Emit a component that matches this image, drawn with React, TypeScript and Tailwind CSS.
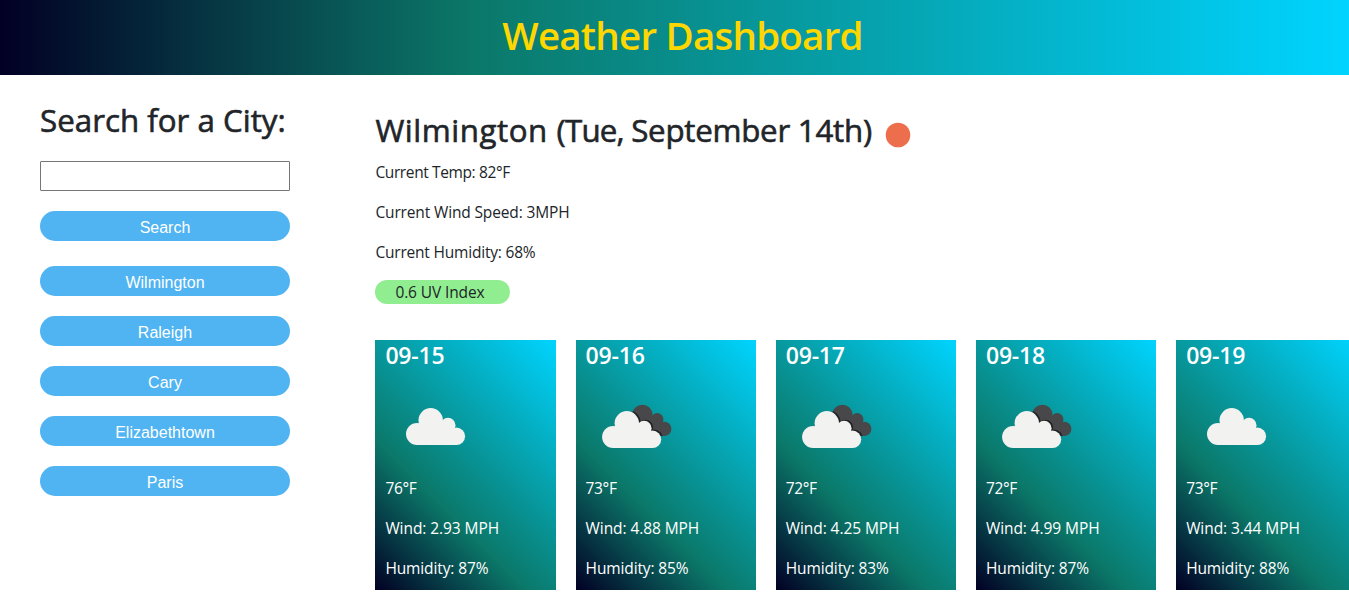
type Day = { date: string; icon: "cloud" | "broken"; temp: string; wind: string; humidity: string };

const cities = ["Wilmington", "Raleigh", "Cary", "Elizabethtown", "Paris"];

const days: Day[] = [
  { date: "09-15", icon: "cloud", temp: "76°F", wind: "2.93", humidity: "87%" },
  { date: "09-16", icon: "broken", temp: "73°F", wind: "4.88", humidity: "85%" },
  { date: "09-17", icon: "broken", temp: "72°F", wind: "4.25", humidity: "83%" },
  { date: "09-18", icon: "broken", temp: "72°F", wind: "4.99", humidity: "87%" },
  { date: "09-19", icon: "cloud", temp: "73°F", wind: "3.44", humidity: "88%" },
];

function CloudShape() {
  return (
    <>
      <circle cx="31.6" cy="57" r="11" />
      <circle cx="45.3" cy="43.3" r="12.2" />
      <circle cx="62.6" cy="48.2" r="7.5" />
      <circle cx="71" cy="59.3" r="8.7" />
      <path d="M31 48H62L71 54V68H31Z" />
    </>
  );
}

function DarkShape() {
  return (
    <>
      <circle cx="56.4" cy="38" r="10.3" />
      <circle cx="71.2" cy="42.3" r="6.2" />
      <circle cx="78.2" cy="51.9" r="7.2" />
      <path d="M50 42L66 40L76 48L78 59H60Z" />
    </>
  );
}

function WeatherIcon({ kind, id }: { kind: Day["icon"]; id: string }) {
  return (
    <svg viewBox="0 0 100 100" className="size-[100px] shrink-0" aria-hidden="true">
      {kind === "broken" && (
        <>
          <clipPath id={id}>
            <DarkShape />
          </clipPath>
          <g fill="#48484a">
            <DarkShape />
          </g>
          <g clipPath={`url(#${id})`}>
            <g fill="#202124" transform="translate(-3 2)">
              <CloudShape />
            </g>
          </g>
        </>
      )}
      <g fill="#f2f2f0" transform={kind === "broken" ? "translate(-4.5 3)" : "translate(0.4 0)"}>
        <CloudShape />
      </g>
    </svg>
  );
}

const buttonClass =
  "h-[30px] w-full rounded-full bg-[#4fb4f1] pt-[3px] text-center font-['Liberation_Sans',Arial,sans-serif] text-base leading-[27px] text-white";

export default function App() {
  return (
    <div className="h-[600px] w-full overflow-hidden bg-white font-['Open_Sans',sans-serif] text-[#212529]">
      <header className="flex h-[75px] items-center justify-center bg-[linear-gradient(90deg,#020024_0%,#0b7869_35%,#00d4ff_100%)] pb-1.5 pl-4">
        <h1 className="text-[38.5px] font-semibold leading-[48px] tracking-[-0.77px] text-[#ffd700]">
          Weather Dashboard
        </h1>
      </header>

      <div className="flex">
        <aside className="w-[375.4px] shrink-0 pl-10 pt-[26px]">
          <h2 className="whitespace-nowrap text-[31.3px] leading-[38px] [-webkit-text-stroke:0.6px_#212529]">
            Search for a City:
          </h2>
          <div className="w-[250px]">
            <input
              aria-label="City"
              className="mt-[22px] block h-[30px] w-full rounded-[1px] border border-[#767676] bg-white px-1"
            />
            <button className={`${buttonClass} mt-5 block`}>Search</button>
            <div className="mt-[25px] flex flex-col gap-5">
              {cities.map((city) => (
                <button key={city} className={buttonClass}>
                  {city}
                </button>
              ))}
            </div>
          </div>
        </aside>

        <main className="shrink-0 pt-9">
          <div className="flex h-[38px] items-center gap-[13px]">
            <h2 className="whitespace-nowrap text-[31.3px] leading-[38px] [-webkit-text-stroke:0.6px_#212529]">
              <span className="tracking-[0.55px]">Wilmington </span>
              <span className="tracking-[-0.8px]">(Tue, </span>
              <span className="tracking-[-0.26px]">September 14th)</span>
            </h2>
            <svg viewBox="0 0 26 26" className="mt-[9px] size-[26px]" aria-hidden="true">
              <circle cx="13" cy="13" r="12.3" fill="#ec6e4c" />
            </svg>
          </div>
          <div className="mt-[11px] flex flex-col gap-4 text-[15.5px] leading-6">
            <p className="tracking-[-0.38px]">Current Temp: 82°F</p>
            <p className="tracking-[-0.14px]">Current Wind Speed: 3MPH</p>
            <p className="tracking-[-0.2px]">Current Humidity: 68%</p>
            <p className="w-[135px] rounded-full bg-[#90ee90] pl-5 tracking-[-0.12px]">0.6 UV Index</p>
          </div>

          <div className="mt-9 flex gap-5">
            {days.map((day) => (
              <section
                key={day.date}
                className="flex h-[250px] w-[180.2px] shrink-0 flex-col bg-[linear-gradient(45deg,#020024_0%,#0b7869_35%,#00d4ff_100%)] pl-2.5 text-[15.5px] leading-6 text-white"
              >
                <h3 className="pt-px text-[23px] font-semibold leading-[29px] tracking-[-0.2px]">{day.date}</h3>
                <div className="mt-[7px]">
                  <WeatherIcon kind={day.icon} id={`back-${day.date}`} />
                </div>
                <div className="-mt-px flex flex-col gap-4">
                  <p className="tracking-[-0.35px]">{day.temp}</p>
                  <p className="tracking-[-0.08px]">Wind: {day.wind} MPH</p>
                  <p className="tracking-[-0.12px]">Humidity: {day.humidity}</p>
                </div>
              </section>
            ))}
          </div>
        </main>
      </div>
    </div>
  );
}
